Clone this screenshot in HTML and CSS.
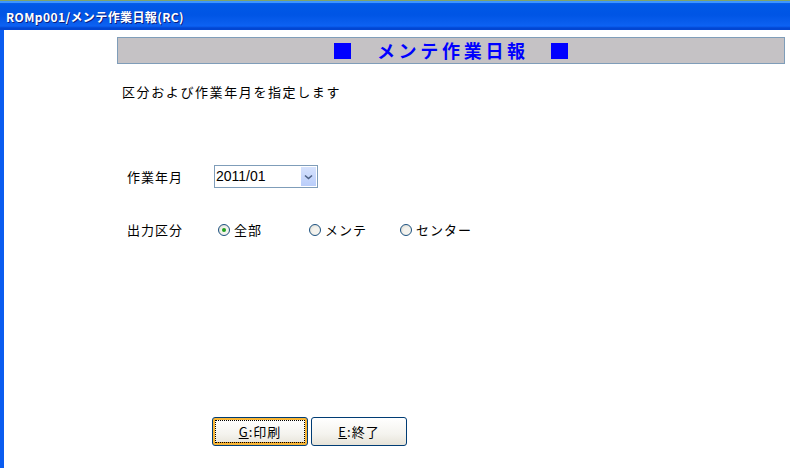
FILE: index.html
```html
<!DOCTYPE html>
<html lang="ja">
<head>
<meta charset="utf-8">
<title>ROMp001</title>
<link rel="stylesheet" href="styles.css">
</head>
<body>
<div class="window">
  <div class="titlebar"><span class="title">ROMp001/メンテ作業日報(RC)</span></div>
  <div class="frame">
    <div class="content">
      <div class="header">
        <span class="sq"></span>
        <span class="htext">メンテ作業日報</span>
        <span class="sq"></span>
      </div>
      <p class="desc">区分および作業年月を指定します</p>
      <div class="row row-date">
        <span class="label">作業年月</span>
        <div class="select">
          <span class="sel-text">2011/01</span>
          <span class="sel-btn">
            <svg width="9" height="6" viewBox="0 0 9 6"><path d="M1 1.5 L4.5 4.5 L8 1.5" fill="none" stroke="#4d6185" stroke-width="1.6"/></svg>
          </span>
        </div>
      </div>
      <div class="row row-radio">
        <span class="label">出力区分</span>
        <div class="options">
          <span class="opt"><span class="radio checked"></span>全部</span>
          <span class="opt"><span class="radio"></span>メンテ</span>
          <span class="opt"><span class="radio"></span>センター</span>
        </div>
      </div>
      <div class="buttons">
        <button class="btn focused"><span class="btn-in"><u>G</u>:印刷</span></button>
        <button class="btn"><span class="btn-in"><u>E</u>:終了</span></button>
      </div>
    </div>
  </div>
</div>
</body>
</html>
```
FILE: styles.css
```css
html, body {
  margin: 0;
  padding: 0;
  background: #ffffff;
}
body {
  width: 790px;
  height: 468px;
  overflow: hidden;
  font-family: "Noto Sans CJK JP", "DejaVu Sans", sans-serif;
  color: #000;
}
.window {
  display: flex;
  flex-direction: column;
  height: 468px;
}
.titlebar {
  height: 27px;
  border-top: 1px solid #7fa36a;
  box-shadow: inset 0 2px 0 #3d95ff;
  background: linear-gradient(#0a64ef 0px, #0058e6 4px, #0055e5 14px, #0a5eee 22px, #0c62f4 25px, #0246d2 27px);
  display: flex;
  align-items: center;
  padding-left: 6px;
  padding-top: 2px;
  box-sizing: content-box;
}
.title {
  color: #ffffff;
  font-family: "Noto Sans CJK JP", sans-serif;
  font-size: 12px;
  font-weight: bold;
  text-shadow: 1px 1px 0 #0a1f80;
  letter-spacing: 0.4px;
}
.frame {
  flex: 1;
  border-left: 4px solid #0a5cf0;
  display: flex;
}
.content {
  flex: 1;
  padding-left: 113px;
  padding-top: 7px;
  display: flex;
  flex-direction: column;
}
.header {
  width: 666px;
  height: 25px;
  border: 1px solid #7f9db9;
  background: #c5c2c5;
  display: flex;
  align-items: center;
  justify-content: center;
  gap: 26px;
}
.sq {
  width: 17px;
  height: 16px;
  background: #0000ff;
}
.htext {
  color: #0000ff;
  font-size: 18px;
  font-weight: bold;
  letter-spacing: 3.7px;
  margin-right: -3.7px;
  line-height: 25px;
}
.desc {
  margin: 20px 0 0 5px;
  font-size: 13px;
  letter-spacing: 1.6px;
  line-height: 16px;
}
.row {
  display: flex;
  align-items: center;
  margin-left: 10px;
}
.row-date {
  margin-top: 65px;
}
.row-radio {
  margin-top: 32px;
}
.label {
  width: 87px;
  font-size: 13px;
  letter-spacing: 1px;
}
.select {
  width: 102px;
  height: 21px;
  border: 1px solid #7f9db9;
  display: flex;
  align-items: stretch;
  background: #fff;
}
.sel-text {
  flex: 1;
  font-family: "Liberation Sans", Arial, sans-serif;
  font-size: 14px;
  line-height: 21px;
  padding-left: 1px;
}
.sel-btn {
  width: 15px;
  margin: 1px;
  background: linear-gradient(#d6e2fd, #b9cdfa);
  display: flex;
  align-items: center;
  justify-content: center;
}
.options {
  display: flex;
  margin-left: 4px;
}
.opt {
  width: 91px;
  display: flex;
  align-items: center;
  font-size: 13px;
  letter-spacing: 1px;
  line-height: 18px;
}
.radio {
  width: 10px;
  height: 10px;
  border: 1px solid #1c5180;
  border-radius: 50%;
  background: radial-gradient(circle at 60% 60%, #f4f3ee 40%, #d4d2c8 100%);
  margin-right: 4px;
  position: relative;
}
.radio.checked::after {
  content: "";
  position: absolute;
  left: 3px;
  top: 3px;
  width: 4px;
  height: 4px;
  border-radius: 50%;
  background: #21a121;
}
.buttons {
  display: flex;
  gap: 3px;
  margin-top: 178px;
  margin-left: 95px;
}
.btn {
  width: 96px;
  height: 29px;
  padding: 0;
  border: 1px solid #003c74;
  border-radius: 3px;
  background: linear-gradient(#ffffff, #f4f3ee 60%, #e6e3d8);
  font-family: "Noto Sans CJK JP", sans-serif;
  font-size: 13px;
  color: #000;
  display: flex;
  align-items: stretch;
  justify-content: stretch;
}
.btn-in {
  flex: 1;
  display: flex;
  align-items: center;
  justify-content: center;
  letter-spacing: 1px;
  border: 1px solid transparent;
  margin: 1px;
}
.btn.focused {
  box-shadow: inset 0 0 0 2px #f8b636, inset 0 -1px 0 2px #e5971f;
}
.btn.focused .btn-in {
  border: 1px dotted #000;
  margin: 2px;
}
u {
  text-decoration: underline;
}
```
